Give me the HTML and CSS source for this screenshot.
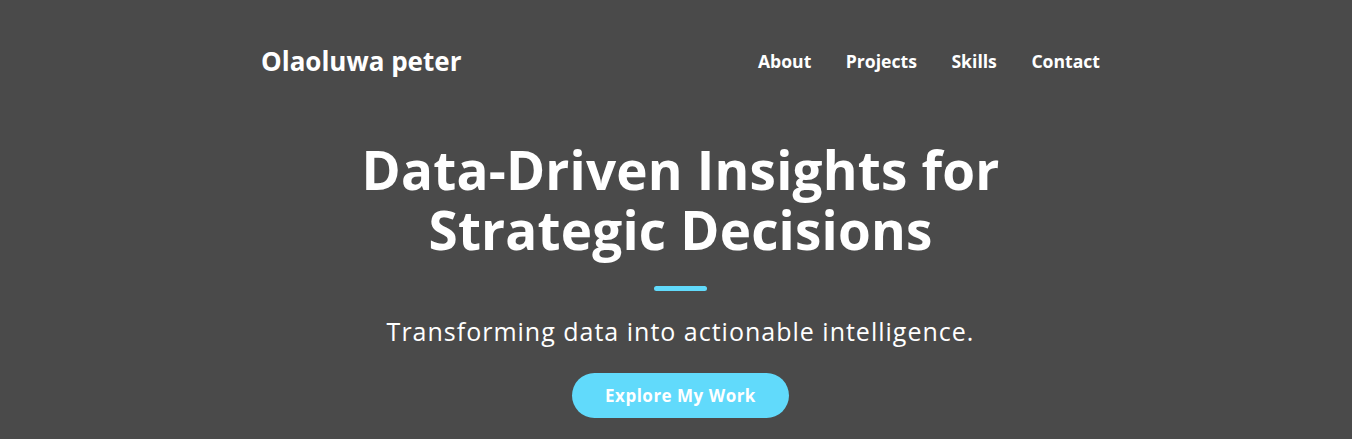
FILE: index.html
```html
<!DOCTYPE html>
<html lang="en">
<head>
<meta charset="utf-8">
<title>Olaoluwa peter</title>
<link rel="stylesheet" href="styles.css">
</head>
<body>
<div class="page">
  <header class="header">
    <div class="logo">Olaoluwa peter</div>
    <nav class="nav">
      <a href="#about">About</a>
      <a href="#projects">Projects</a>
      <a href="#skills">Skills</a>
      <a href="#contact">Contact</a>
    </nav>
  </header>
  <section class="hero">
    <h1 class="title"><span class="line">Data-Driven Insights for</span><span class="line">Strategic Decisions</span></h1>
    <div class="rule"></div>
    <p class="subtitle">Transforming data into actionable intelligence.</p>
    <a class="btn" href="#projects">Explore My Work</a>
  </section>
</div>
</body>
</html>
```

FILE: styles.css
```css
html, body {
  margin: 0;
  padding: 0;
  background: #4a4a4a;
  height: 100%;
  overflow: hidden;
}
body {
  padding-left: 9px;
  font-family: "Open Sans", "DejaVu Sans", sans-serif;
  color: #ffffff;
}
.page {
  width: 839px;
  margin: 0 auto;
}
.header {
  display: flex;
  justify-content: space-between;
  align-items: center;
  height: 122px;
}
.logo {
  font-size: 26px;
  font-weight: 700;
}
.nav {
  display: flex;
  gap: 34.5px;
}
.nav a {
  color: #fff;
  text-decoration: none;
  font-size: 17.6px;
  font-weight: 700;
}
.hero {
  display: flex;
  flex-direction: column;
  align-items: center;
  text-align: center;
}
.title {
  margin: 18px 0 0;
  font-size: 53px;
  line-height: 60px;
  font-weight: 700;
  letter-spacing: 0.2px;
  display: flex;
  flex-direction: column;
}
.title .line {
  display: block;
  height: 60px;
}
.rule {
  width: 53px;
  height: 5px;
  border-radius: 3px;
  background: #61dafb;
  margin-top: 26px;
}
.subtitle {
  margin: 24px 0 0;
  font-size: 25px;
  font-weight: 400;
  line-height: 32px;
  letter-spacing: 1px;
}
.btn {
  margin-top: 26px;
  display: inline-block;
  background: #61dafb;
  color: #fff;
  text-decoration: none;
  font-weight: 700;
  font-size: 17px;
  letter-spacing: 0.5px;
  line-height: 45px;
  height: 45px;
  padding: 0 33px;
  border-radius: 23px;
}
```
